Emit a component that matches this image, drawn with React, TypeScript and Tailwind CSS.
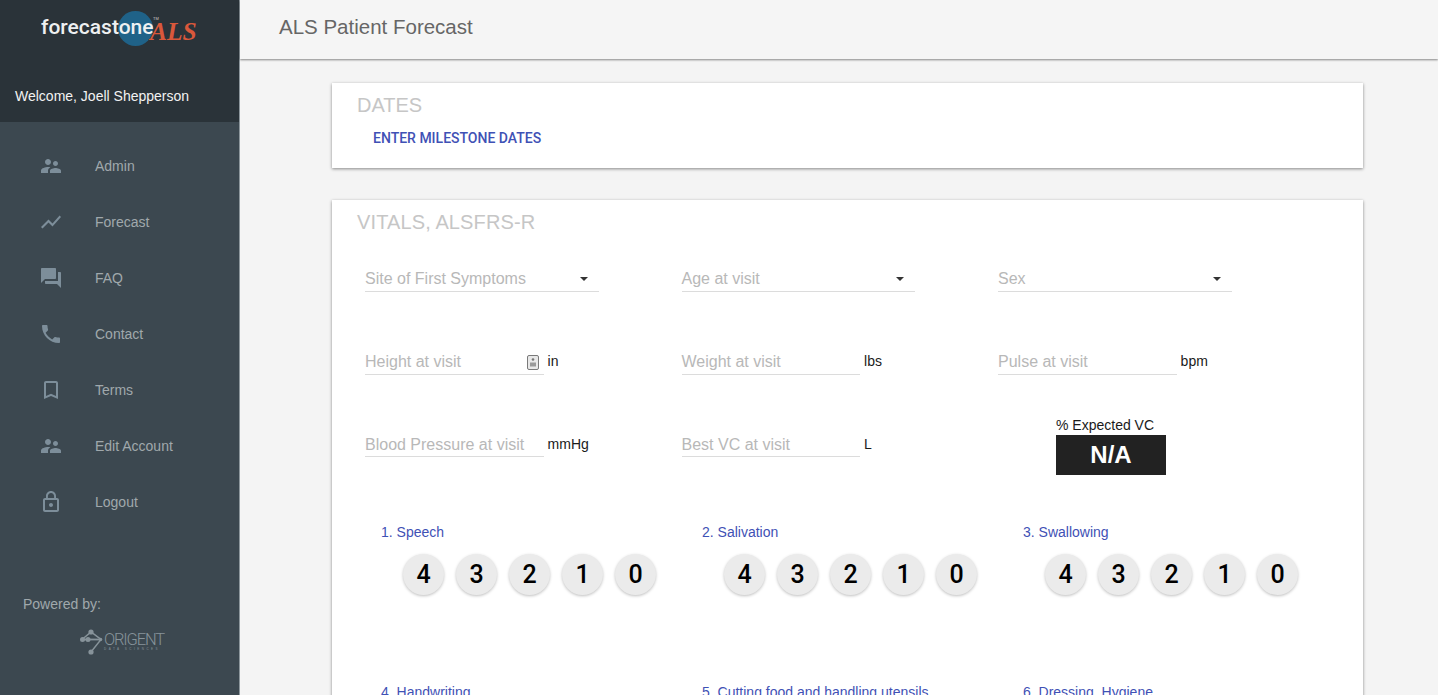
import React from 'react';

const PEOPLE = 'M16.5 12c1.38 0 2.49-1.12 2.49-2.5S17.88 7 16.5 7C15.12 7 14 8.12 14 9.5s1.12 2.5 2.5 2.5zM9 11c1.66 0 2.99-1.34 2.99-3S10.66 5 9 5C7.34 5 6 6.34 6 8s1.34 3 3 3zm7.5 3c-1.83 0-5.5.92-5.5 2.75V19h11v-2.25c0-1.83-3.67-2.75-5.5-2.75zM9 13c-2.33 0-7 1.17-7 3.5V19h7v-2.25c0-.85.33-2.34 2.37-3.47C10.5 13.1 9.66 13 9 13z';

const navItems = [
  { label: 'Admin', d: PEOPLE },
  { label: 'Forecast', d: 'M3.5 18.49l6-6.01 4 4L22 6.92l-1.41-1.41-7.09 7.97-4-4L2 16.99z' },
  { label: 'FAQ', d: 'M21 6h-2v9H6v2c0 .55.45 1 1 1h11l4 4V7c0-.55-.45-1-1-1zm-4 6V3c0-.55-.45-1-1-1H3c-.55 0-1 .45-1 1v14l4-4h10c.55 0 1-.45 1-1z' },
  { label: 'Contact', d: 'M6.62 10.79c1.44 2.83 3.76 5.14 6.59 6.59l2.2-2.2c.27-.27.67-.36 1.02-.24 1.12.37 2.33.57 3.57.57.55 0 1 .45 1 1V20c0 .55-.45 1-1 1-9.39 0-17-7.61-17-17 0-.55.45-1 1-1h3.5c.55 0 1 .45 1 1 0 1.25.2 2.45.57 3.57.11.35.03.74-.25 1.02l-2.2 2.2z' },
  { label: 'Terms', d: 'M17 3H7c-1.1 0-1.99.9-1.99 2L5 21l7-3 7 3V5c0-1.1-.9-2-2-2zm0 15l-5-2.18L7 18V5h10v13z' },
  { label: 'Edit Account', d: PEOPLE },
  { label: 'Logout', d: 'M12 17c1.1 0 2-.9 2-2s-.9-2-2-2-2 .9-2 2 .9 2 2 2zm6-9h-1V6c0-2.76-2.24-5-5-5S7 3.24 7 6v2H6c-1.1 0-2 .9-2 2v10c0 1.1.9 2 2 2h12c1.1 0 2-.9 2-2V10c0-1.1-.9-2-2-2zM8.9 6c0-1.71 1.39-3.1 3.1-3.1 1.71 0 3.1 1.39 3.1 3.1v2H8.9V6zM18 20H6V10h12v10z' },
];

const questionsTop = ['1. Speech', '2. Salivation', '3. Swallowing'];
const questionsNext = ['4. Handwriting', '5. Cutting food and handling utensils', '6. Dressing, Hygiene'];

const SelectField: React.FC<{ label: string }> = ({ label }) => (
  <div className="flex h-[30px] w-[233.8px] items-center justify-between border-b border-[#dcdcdc] pt-[5px] pr-[11px] text-[16px] text-[#b8b8b8]">
    <span>{label}</span>
    <span className="h-0 w-0 border-x-[4px] border-t-[4px] border-x-transparent border-t-[#333]" />
  </div>
);

const TextField: React.FC<{ label: string; unit: string; badge?: boolean }> = ({ label, unit, badge }) => (
  <div className="flex items-center">
    <div className="flex h-[30px] w-[178.6px] items-center justify-between border-b border-[#dcdcdc] pt-[6px] pr-[5px] text-[16px] text-[#b8b8b8]">
      <span>{label}</span>
      {badge && (
        <svg width="12" height="15" viewBox="0 0 12 15">
          <rect x="0.5" y="0.5" width="11" height="14" rx="1.5" fill="#e8e8e8" stroke="#7a7a7a" />
          <circle cx="6" cy="4.5" r="1.3" fill="#777" />
          <rect x="3" y="7.5" width="6" height="4" fill="#999" />
        </svg>
      )}
    </div>
    <span className="ml-[4px] pt-[4px] text-[14px] text-[#1a1a1a]">{unit}</span>
  </div>
);

const Question: React.FC<{ title: string; scores?: boolean }> = ({ title, scores }) => (
  <div>
    <div className="h-[20px] text-[14px] leading-[20px] text-[#3f51b5]">{title}</div>
    {scores && (
      <div className="mt-[12px] ml-[22px] flex gap-[12px]">
        {[4, 3, 2, 1, 0].map((n) => (
          <div
            key={n}
            className="flex h-[41px] w-[41px] items-center justify-center rounded-full bg-[#ebebeb] font-['Roboto',sans-serif] text-[25px] font-medium text-black shadow-[0_1px_3px_rgba(0,0,0,0.25)]"
          >
            {n}
          </div>
        ))}
      </div>
    )}
  </div>
);

export default function App() {
  return (
    <div className="flex h-[695px] w-[1438px] overflow-hidden bg-[#f4f4f4] font-['Liberation_Sans',Arial,sans-serif]">
      <aside className="flex w-[240px] shrink-0 flex-col border-r border-[#8d979d] bg-[#3c4850]">
        <div className="h-[122px] bg-[#2a3339] pt-[8px]">
          <div className="relative ml-[41px] h-[36px] w-[160px]">
            <span className="absolute top-[3px] left-[77px] h-[35px] w-[35px] rounded-full bg-[#1f6288]" />
            <span className="absolute top-[7px] left-0 font-['Roboto',sans-serif] text-[21px] leading-[24px] font-medium text-[#eef0f1]">forecastone</span>
            <span className="absolute top-[9px] left-[112px] text-[4px] leading-none text-[#ccc]">TM</span>
            <span className="absolute top-[9px] left-[109px] font-['Liberation_Serif',serif] text-[25.5px] leading-[30px] font-bold italic text-[#d9583b]">ALS</span>
          </div>
          <div className="mt-[43px] ml-[15px] text-[14px] leading-[18px] text-[#f2f2f2]">Welcome, Joell Shepperson</div>
        </div>
        <nav className="flex flex-col pt-[16px]">
          {navItems.map((item) => (
            <div key={item.label} className="flex h-[56px] items-center pl-[39px] text-[14px] text-[#a0a8ac]">
              <svg width="24" height="24" viewBox="0 0 24 24" className="shrink-0 fill-[#7d8e9a]">
                <path d={item.d} />
              </svg>
              <span className="ml-[32px]">{item.label}</span>
            </div>
          ))}
        </nav>
        <div className="mt-[65px] ml-[23px] text-[14px] leading-[18px] text-[#a0a8ac]">Powered by:</div>
        <div className="mt-[16px] ml-[80px] flex items-center">
          <svg width="23" height="26" viewBox="0 0 23 26" className="shrink-0">
            <path d="M2 10.5 L11 3 L21 10.5 L11 23" fill="none" stroke="#87939a" strokeWidth="1.5" />
            <path d="M2 10.5 L21 10.5" fill="none" stroke="#87939a" strokeWidth="1.8" />
            <circle cx="11" cy="3" r="2.6" fill="#87939a" />
            <circle cx="2.5" cy="10.5" r="2.5" fill="#87939a" />
            <circle cx="8" cy="10.5" r="2.5" fill="#87939a" />
            <circle cx="20.5" cy="10.5" r="1.8" fill="#87939a" />
            <circle cx="11" cy="23" r="2.6" fill="#87939a" />
          </svg>
          <div className="ml-[1px] flex flex-col">
            <span className="font-['Roboto',sans-serif] text-[16.5px] leading-[14px] font-light tracking-[-1.15px] text-[#87939a]">ORIGENT</span>
            <span className="mt-[1px] text-[3px] leading-[3px] tracking-[2.5px] whitespace-nowrap text-[#87939a]">DATA SCIENCES</span>
          </div>
        </div>
      </aside>
      <div className="flex min-w-0 flex-1 flex-col">
        <header className="h-[59px] shrink-0 bg-[#f5f5f5] pl-[39px] text-[20.5px] leading-[54px] text-[#666] shadow-[0_1px_2px_rgba(0,0,0,0.45)]">
          ALS Patient Forecast
        </header>
        <main className="ml-[92px] w-[1031px] pt-[24px]">
          <section className="h-[85px] bg-white pt-[10px] pl-[25px] shadow-[0_1px_3px_rgba(0,0,0,0.45)]">
            <h2 className="text-[20px] leading-[24px] text-[#c6c6c6]">DATES</h2>
            <div className="mt-[13px] ml-[16px] font-['Roboto',sans-serif] text-[14px] leading-[16px] font-medium text-[#3f51b5]">ENTER MILESTONE DATES</div>
          </section>
          <section className="mt-[32px] bg-white pt-[10px] pb-[40px] shadow-[0_1px_3px_rgba(0,0,0,0.45)]">
            <h2 className="pl-[25px] text-[20px] leading-[24px] font-normal tracking-[0.12px] text-[#c6c6c6]">VITALS, ALSFRS-R</h2>
            <div className="mt-[28px] grid auto-rows-[30px] grid-cols-[316.5px_316.5px_1fr] gap-y-[52.7px] pl-[33px]">
              <SelectField label="Site of First Symptoms" />
              <SelectField label="Age at visit" />
              <SelectField label="Sex" />
              <TextField label="Height at visit" unit="in" badge />
              <TextField label="Weight at visit" unit="lbs" />
              <TextField label="Pulse at visit" unit="bpm" />
              <TextField label="Blood Pressure at visit" unit="mmHg" />
              <TextField label="Best VC at visit" unit="L" />
              <div className="-mt-[10px] ml-[58px] text-[14px] leading-[16px] text-[#1a1a1a]">
                <div>% Expected VC</div>
                <div className="mt-[2px] flex h-[40px] w-[110px] items-center justify-center bg-[#222] text-[24px] font-bold text-white">N/A</div>
              </div>
            </div>
            <div className="mt-[65px] grid grid-cols-[321px_321px_321px] pl-[49px]">
              {questionsTop.map((q) => (
                <div key={q} className="h-[160px]">
                  <Question title={q} scores />
                </div>
              ))}
              {questionsNext.map((q) => (
                <div key={q}>
                  <Question title={q} />
                </div>
              ))}
            </div>
          </section>
        </main>
      </div>
    </div>
  );
}
